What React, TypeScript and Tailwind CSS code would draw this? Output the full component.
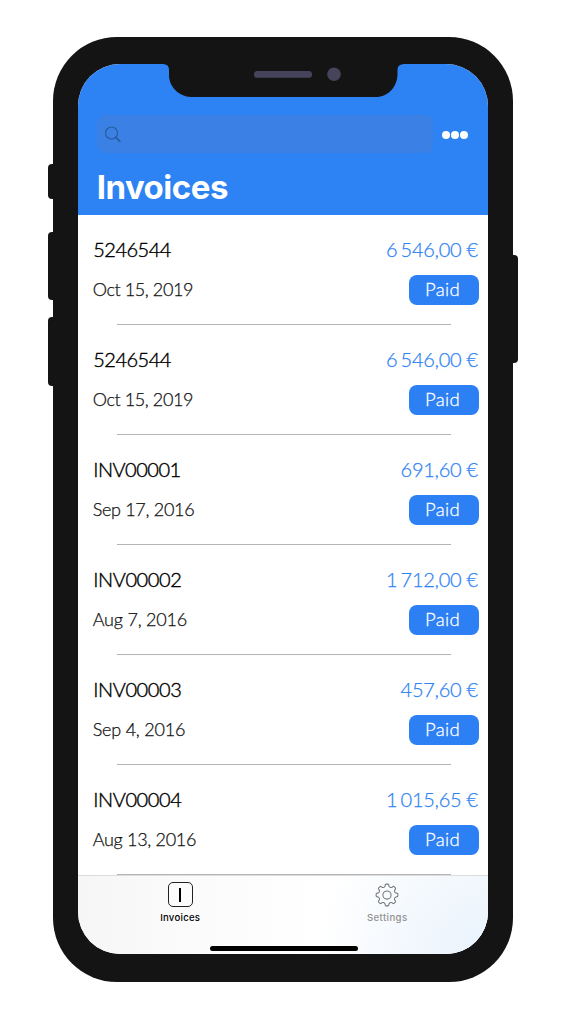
type Invoice = { id: string; thousands?: string; amount: string; date: string; idStyle: string; dateStyle: string };

const invoices: Invoice[] = [
  { id: '5246544', thousands: '6', amount: '546,00 €', date: 'Oct 15, 2019', idStyle: 'tracking-[-0.5px]', dateStyle: 'tracking-[-0.4px]' },
  { id: '5246544', thousands: '6', amount: '546,00 €', date: 'Oct 15, 2019', idStyle: 'tracking-[-0.5px]', dateStyle: 'tracking-[-0.4px]' },
  { id: 'INV00001', amount: '691,60 €', date: 'Sep 17, 2016', idStyle: 'tracking-[-0.5px]', dateStyle: 'tracking-[-0.3px]' },
  { id: 'INV00002', thousands: '1', amount: '712,00 €', date: 'Aug 7, 2016', idStyle: 'tracking-[-0.4px]', dateStyle: 'tracking-[-0.2px]' },
  { id: 'INV00003', amount: '457,60 €', date: 'Sep 4, 2016', idStyle: 'tracking-[-0.4px]', dateStyle: 'tracking-[-0.2px]' },
  { id: 'INV00004', thousands: '1', amount: '015,65 €', date: 'Aug 13, 2016', idStyle: 'tracking-[-0.4px]', dateStyle: 'tracking-[-0.3px]' },
];

function InvoiceRow({ id, thousands, amount, date, idStyle, dateStyle }: Invoice) {
  return (
    <li className="flex h-[110px] shrink-0 flex-col pl-[15px] pr-[9.5px] pt-[19px] font-light">
      <div className="flex h-[30px] items-center justify-between whitespace-nowrap text-[20px] leading-[30px]">
        <span className={`pl-[0.5px] text-black [-webkit-text-stroke:0.4px_#000] ${idStyle}`}>{id}</span>
        <span className="pr-px tracking-[-0.25px] text-[#2d82f4] [-webkit-text-stroke:0.25px_#2d82f4]">
          {thousands && <span className="[word-spacing:-2px]">{thousands + ' '}</span>}
          {amount}
        </span>
      </div>
      <div className="mt-[11px] flex h-[30px] items-center justify-between whitespace-nowrap text-[18px] leading-[30px]">
        <span className={`pb-[2px] text-[#111] [-webkit-text-stroke:0.25px_#111] ${dateStyle}`}>{date}</span>
        <span className="flex h-[30px] w-[70px] items-center justify-center rounded-lg bg-[#2d80f3] pb-[2px] pr-[3px] text-[18.5px] tracking-[0.3px] text-white [-webkit-text-stroke:0.3px_#fff]">Paid</span>
      </div>
      <div className="ml-6 mr-[28px] mt-[19px] h-px bg-[#b4b4b4]" />
    </li>
  );
}

function Gear() {
  const points: string[] = [];
  for (let i = 0; i < 8; i++) {
    const at = (r: number, deg: number) => {
      const a = ((i * 45 + deg - 90) * Math.PI) / 180;
      return `${(12 + r * Math.cos(a)).toFixed(2)} ${(12 + r * Math.sin(a)).toFixed(2)}`;
    };
    points.push(`${i ? 'L' : 'M'}${at(8.6, -16)} Q${at(9, -11)} ${at(10.2, -10)} Q${at(10.9, -9)} ${at(10.9, -5)} L${at(10.9, 5)} Q${at(10.9, 9)} ${at(10.2, 10)} Q${at(9, 11)} ${at(8.6, 16)} Q${at(8, 22.5)} ${at(8.6, 29)}`);
  }
  return (
    <svg className="h-6 w-6" viewBox="0 0 24 24" fill="none" stroke="#757575" strokeWidth="1.05" strokeLinejoin="round">
      <path d={points.join(' ') + 'Z'} />
      <circle cx="12" cy="12" r="4.1" />
    </svg>
  );
}

export default function App() {
  return (
    <main className="h-[1020px] w-[567px] overflow-hidden bg-white pl-[52.7px] pt-[37px] font-['Lato','Open_Sans',sans-serif]">
      <div className="relative h-[944.6px] w-[460.8px] rounded-[64px] bg-[#141414] pl-[25px] pt-[27.2px]">
        <div className="absolute -left-[4.7px] top-[127px] h-[35px] w-3 rounded-[4px] bg-[#141414]" />
        <div className="absolute -left-[4.7px] top-[195px] h-[68px] w-3 rounded-[4px] bg-[#141414]" />
        <div className="absolute -left-[4.7px] top-[280px] h-[69px] w-3 rounded-[4px] bg-[#141414]" />
        <div className="absolute -right-[4.5px] top-[218px] h-[108px] w-3 rounded-[4px] bg-[#141414]" />

        <section className="relative flex h-[890px] w-[410.8px] flex-col overflow-hidden rounded-[42px] bg-white">
          <header className="h-[151px] shrink-0 bg-[#2d82f4] pl-[19px] pt-[51px]">
            <div className="flex items-center">
              <div className="flex h-[38px] w-[336px] items-center rounded-[8px] bg-[#3b80e5] pl-2 pt-px">
                <svg className="h-[17px] w-[17px]" viewBox="0 0 17 17" fill="none" stroke="#285c9e" strokeLinecap="round">
                  <circle cx="6.5" cy="7" r="6" strokeWidth="1.2" />
                  <path d="M10.9 11.4L14.8 15.3" strokeWidth="1.7" />
                </svg>
              </div>
              <div className="ml-[9px] flex gap-[1.3px] pt-[2px]">
                <span className="h-2 w-2 rounded-full bg-white" />
                <span className="h-2 w-2 rounded-full bg-white" />
                <span className="h-2 w-2 rounded-full bg-white" />
              </div>
            </div>
            <h1 className="mt-[14px] font-['Inter',sans-serif] text-[33px] font-bold leading-[40px] tracking-[-0.5px] text-white">Invoices</h1>
          </header>

          <ul className="flex h-[660px] shrink-0 flex-col overflow-hidden">
            {invoices.map((invoice, index) => <InvoiceRow key={index} {...invoice} />)}
          </ul>

          <footer className="relative flex flex-1 border-t border-[#dcdcdc] bg-[radial-gradient(circle_at_100%_100%,#e8f2fd_0,#f3f8fd_80px,transparent_170px),linear-gradient(90deg,#f6f6f6_0%,#fcfcfc_35%,#ffffff_60%)] font-['Inter',sans-serif] text-[9.6px] font-medium leading-3">
            <div className="flex w-[205px] shrink-0 flex-col items-center pt-1.5">
              <span className="flex h-[25px] w-[25px] items-center justify-center rounded-[5px] border border-[#222] bg-[#fcfcfc]">
                <span className="h-[14px] w-[2px] bg-black" />
              </span>
              <span className="mt-[5px] tracking-[0.25px] text-black">Invoices</span>
            </div>
            <div className="flex w-[209px] shrink-0 flex-col items-center pt-[7px]">
              <Gear />
              <span className="mt-[5px] tracking-[0.4px] text-[#929292]">Settings</span>
            </div>
            <div className="absolute bottom-[3px] left-[132px] h-[5px] w-[148px] rounded-full bg-black" />
          </footer>

          <svg className="absolute left-[86px] top-0 h-[34px] w-[239px]" viewBox="0 0 239 34" fill="none">
            <path d="M0 0H239V0.3Q233.5 0.5 233.5 6V11C233 23 224 33 212 33H27C15 32.5 5 23 5 11V6Q5 0.5 0 0.3Z" fill="#141414" />
            <path d="M93.3 10.4H144.7" stroke="#45445b" strokeWidth="6.7" strokeLinecap="round" />
            <circle cx="170" cy="10.3" r="6.8" fill="#45445b" />
          </svg>
        </section>
      </div>
    </main>
  );
}
